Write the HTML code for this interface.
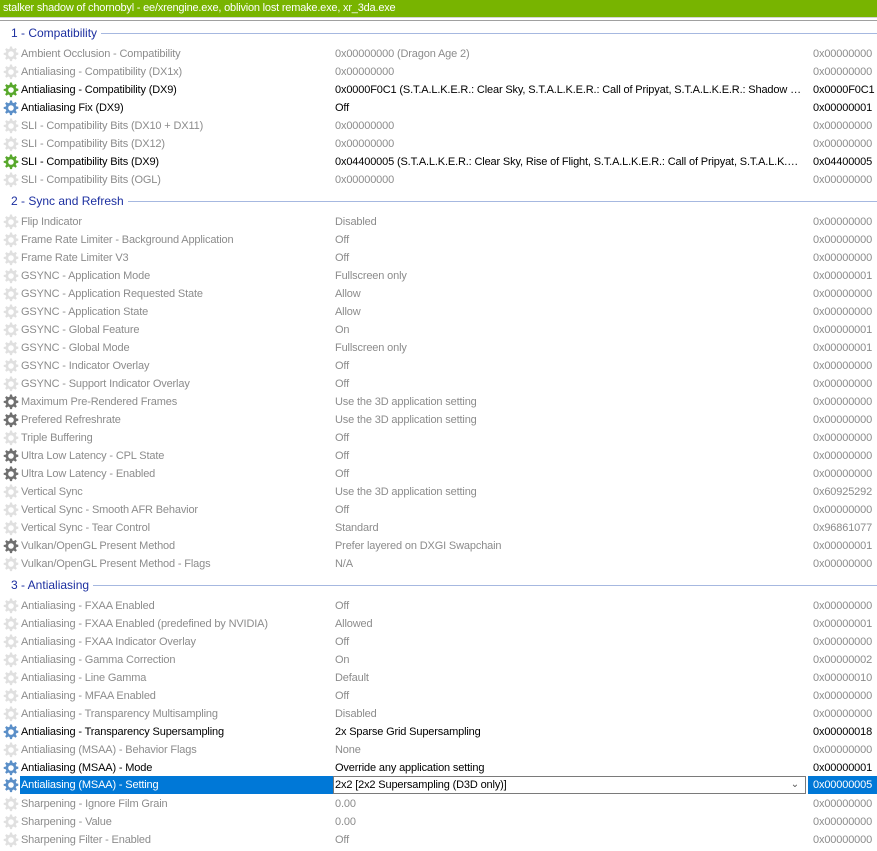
<!DOCTYPE html>
<html><head><meta charset="utf-8"><style>
body{margin:0;width:877px;height:851px;overflow:hidden;background:#fff;font-family:"Liberation Sans",sans-serif;font-size:11px;position:relative}
.top{position:absolute;left:0;top:0;width:877px;height:18px;background:#78b400;color:#fff;font-size:11px;line-height:17px;padding-left:3px;box-sizing:border-box;border-bottom:1px solid #d4d4d4;letter-spacing:-0.2px}
.edge{position:absolute;left:0;top:20px;width:877px;height:1px;background:#a0a0a0}
.grp{position:absolute;left:0;height:18px;width:877px}
.grp span{position:absolute;left:11px;top:0;line-height:18px;font-size:12px;color:#1c2fa0;background:#fff;padding-right:4px}
.grp i{position:absolute;left:11px;right:0;top:9px;height:1px;background:#a6b8e0}
.r{position:absolute;left:0;width:877px;height:18px;line-height:18px;color:#8c8c8c;white-space:nowrap;letter-spacing:-0.15px}
.r svg{position:absolute;left:3px;top:1px}
.n{position:absolute;left:21px}
.v{position:absolute;left:335px;width:467px;overflow:hidden;text-overflow:ellipsis}
.h{position:absolute;left:813px}
.a{color:#000}
.sel .n{background:#0078d7;color:#fff;left:20px;width:313px;padding-left:1px}
.sel .hx{position:absolute;left:808px;width:69px;background:#0078d7;color:#fff;height:18px;padding-left:5px;box-sizing:border-box}
.cb{position:absolute;left:333px;width:473px;top:0;height:18px;border:1px solid #7a7a7a;box-sizing:border-box;background:#fff;color:#000;line-height:16px;padding-left:1px}
.cb b{position:absolute;right:6px;top:0;font-weight:normal;color:#555;font-size:10px}
</style></head><body>
<svg width="0" height="0" style="position:absolute"><defs>
<g id="g"><path d="M7 0.5h2l.4 2 1.4.6 1.7-1.2 1.4 1.4-1.2 1.7.6 1.4 2 .4v2l-2 .4-.6 1.4 1.2 1.7-1.4 1.4-1.7-1.2-1.4.6-.4 2H7l-.4-2-1.4-.6-1.7 1.2-1.4-1.4 1.2-1.7-.6-1.4-2-.4V7l2-.4.6-1.4-1.2-1.7 1.4-1.4 1.7 1.2 1.4-.6z"/><circle cx="8" cy="8" r="2.8" fill="#fff"/></g>
</defs></svg>
<div class="top">stalker shadow of chornobyl - ee/xrengine.exe, oblivion lost remake.exe, xr_3da.exe</div>
<div class="edge"></div>
<div id="c"></div>
<script>
const C={g:'#e0e0e0',G:'#58a82c',B:'#5b8fc8',D:'#707070'};
const groups=[[24,'1 - Compatibility',45,[
['g','Ambient Occlusion - Compatibility','0x00000000 (Dragon Age 2)','0x00000000'],
['g','Antialiasing - Compatibility (DX1x)','0x00000000','0x00000000'],
['G','Antialiasing - Compatibility (DX9)','0x0000F0C1 (S.T.A.L.K.E.R.: Clear Sky, S.T.A.L.K.E.R.: Call of Pripyat, S.T.A.L.K.E.R.: Shadow of Chernobyl, Oblivion Lost)','0x0000F0C1',1],
['B','Antialiasing Fix (DX9)','Off','0x00000001',1],
['g','SLI - Compatibility Bits (DX10 + DX11)','0x00000000','0x00000000'],
['g','SLI - Compatibility Bits (DX12)','0x00000000','0x00000000'],
['G','SLI - Compatibility Bits (DX9)','0x04400005 (S.T.A.L.K.E.R.: Clear Sky, Rise of Flight, S.T.A.L.K.E.R.: Call of Pripyat, S.T.A.L.K.E.R.: Shadow)','0x04400005',1],
['g','SLI - Compatibility Bits (OGL)','0x00000000','0x00000000']]],
[192,'2 - Sync and Refresh',213,[
['g','Flip Indicator','Disabled','0x00000000'],
['g','Frame Rate Limiter - Background Application','Off','0x00000000'],
['g','Frame Rate Limiter V3','Off','0x00000000'],
['g','GSYNC - Application Mode','Fullscreen only','0x00000001'],
['g','GSYNC - Application Requested State','Allow','0x00000000'],
['g','GSYNC - Application State','Allow','0x00000000'],
['g','GSYNC - Global Feature','On','0x00000001'],
['g','GSYNC - Global Mode','Fullscreen only','0x00000001'],
['g','GSYNC - Indicator Overlay','Off','0x00000000'],
['g','GSYNC - Support Indicator Overlay','Off','0x00000000'],
['D','Maximum Pre-Rendered Frames','Use the 3D application setting','0x00000000'],
['D','Prefered Refreshrate','Use the 3D application setting','0x00000000'],
['g','Triple Buffering','Off','0x00000000'],
['D','Ultra Low Latency - CPL State','Off','0x00000000'],
['D','Ultra Low Latency - Enabled','Off','0x00000000'],
['g','Vertical Sync','Use the 3D application setting','0x60925292'],
['g','Vertical Sync - Smooth AFR Behavior','Off','0x00000000'],
['g','Vertical Sync - Tear Control','Standard','0x96861077'],
['D','Vulkan/OpenGL Present Method','Prefer layered on DXGI Swapchain','0x00000001'],
['g','Vulkan/OpenGL Present Method - Flags','N/A','0x00000000']]],
[576,'3 - Antialiasing',597,[
['g','Antialiasing - FXAA Enabled','Off','0x00000000'],
['g','Antialiasing - FXAA Enabled (predefined by NVIDIA)','Allowed','0x00000001'],
['g','Antialiasing - FXAA Indicator Overlay','Off','0x00000000'],
['g','Antialiasing - Gamma Correction','On','0x00000002'],
['g','Antialiasing - Line Gamma','Default','0x00000010'],
['g','Antialiasing - MFAA Enabled','Off','0x00000000'],
['g','Antialiasing - Transparency Multisampling','Disabled','0x00000000'],
['B','Antialiasing - Transparency Supersampling','2x Sparse Grid Supersampling','0x00000018',1],
['g','Antialiasing (MSAA) - Behavior Flags','None','0x00000000'],
['B','Antialiasing (MSAA) - Mode','Override any application setting','0x00000001',1],
['B','Antialiasing (MSAA) - Setting','2x2 [2x2 Supersampling (D3D only)]','0x00000005',2],
['g','Sharpening - Ignore Film Grain','0.00','0x00000000'],
['g','Sharpening - Value','0.00','0x00000000'],
['g','Sharpening Filter - Enabled','Off','0x00000000']]]];
let h='';
for(const [gy,gt,ry,rows] of groups){
h+=`<div class="grp" style="top:${gy}px"><i></i><span>${gt}</span></div>`;
rows.forEach((r,i)=>{const y=ry+i*18-(r[4]==2?1:0);const ic=`<svg width="16" height="16" viewBox="0 0 16 16" fill="${C[r[0]]}"><use href="#g"/></svg>`;
if(r[4]==2)h+=`<div class="r sel" style="top:${y}px">${ic}<span class="n">${r[1]}</span><div class="cb">${r[2]}<b>&#8964;</b></div><span class="hx">${r[3]}</span></div>`;
else h+=`<div class="r${r[4]?' a':''}" style="top:${y}px">${ic}<span class="n">${r[1]}</span><span class="v">${r[2]}</span><span class="h">${r[3]}</span></div>`;});}
document.getElementById('c').innerHTML=h;
</script>
</body></html>
